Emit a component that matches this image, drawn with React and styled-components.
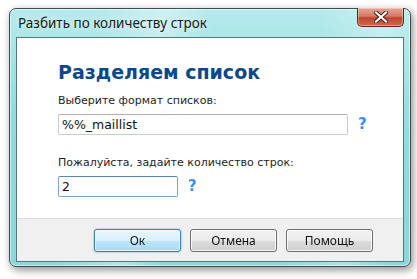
import React, { useState } from 'react';
import styled, { createGlobalStyle } from 'styled-components';

const GlobalStyle = createGlobalStyle`
  html, body {
    margin: 0;
    padding: 0;
    background: #ffffff;
  }
`;

const Page = styled.div`
  width: 417px;
  height: 279px;
  padding: 8px 0 0 9px;
  box-sizing: border-box;
`;

const Window = styled.div`
  width: 402px;
  height: 259px;
  box-sizing: border-box;
  border: 1px solid #3d4c50;
  border-radius: 7px;
  background:
    linear-gradient(100deg, rgba(255,255,255,0) 20%, rgba(255,255,255,0.35) 35%, rgba(255,255,255,0) 45%, rgba(255,255,255,0) 70%, rgba(255,255,255,0.3) 85%, rgba(255,255,255,0) 95%),
    linear-gradient(180deg, #b6eaec 0%, #92dcdd 40%, #8ad8d9 100%);
  box-shadow: 2px 3px 8px rgba(0, 0, 0, 0.45), inset 0 0 0 1px rgba(255, 255, 255, 0.55);
  display: flex;
  flex-direction: column;
  padding: 0 6px 4px 6px;
`;

const TitleBar = styled.div`
  height: 28px;
  flex: none;
  display: flex;
  align-items: flex-start;
  justify-content: space-between;
`;

const Title = styled.div`
  font-family: "Noto Sans", "Open Sans", sans-serif;
  font-size: 13.5px;
  color: #1a1a1a;
  padding: 5px 0 0 2px;
  text-shadow: 0 0 6px rgba(255, 255, 255, 0.9);
`;

const CloseButton = styled.button`
  flex: none;
  width: 47px;
  height: 19px;
  margin: -1px 0 0 0;
  padding: 0;
  border: 1px solid #5c2a22;
  border-top: none;
  border-radius: 0 0 5px 5px;
  background: linear-gradient(180deg, #e8a595 0%, #d47a65 45%, #c0442c 55%, #d0694f 100%);
  box-shadow: inset 0 0 0 1px rgba(255, 255, 255, 0.35);
  display: flex;
  align-items: center;
  justify-content: center;
`;

const Client = styled.div`
  flex: 1;
  border: 1px solid #4c7c82;
  background: #ffffff;
  display: flex;
  flex-direction: column;
`;

const Body = styled.div`
  flex: 1;
  padding: 22px 0 0 41px;
  font-family: "DejaVu Sans", Verdana, sans-serif;
`;

const Heading = styled.h1`
  margin: 0 0 10px 0;
  font-family: "DejaVu Sans", Verdana, sans-serif;
  font-weight: bold;
  font-size: 19px;
  line-height: 24px;
  color: #0d4888;
`;

const Label = styled.div`
  font-family: "DejaVu Sans", Verdana, sans-serif;
  font-size: 11px;
  line-height: 13px;
  color: #1e1e1e;
  margin-bottom: 7px;
`;

const Row = styled.div`
  display: flex;
  align-items: center;
  gap: 10px;
  margin-bottom: ${p => p.$gap || 0}px;
`;

const Input = styled.input`
  width: ${p => p.$w}px;
  height: 21px;
  box-sizing: border-box;
  margin: 0;
  padding: 0 0 0 3px;
  border: 1px solid ${p => p.$focus ? '#7da2ce' : '#c9cdd2'};
  border-top-color: ${p => p.$focus ? '#5b86b8' : '#abadb3'};
  border-radius: 2px;
  font-family: "DejaVu Sans", Verdana, sans-serif;
  font-size: 12.5px;
  color: #111;
  outline: none;
  background: #fff;
`;

const Help = styled.span`
  font-family: "DejaVu Sans", Verdana, sans-serif;
  font-weight: bold;
  font-size: 15px;
  color: #3d8cf0;
  line-height: 1;
`;

const Footer = styled.div`
  height: 43px;
  flex: none;
  background: #f0f0f0;
  border-top: 1px solid #dfdfdf;
  display: flex;
  justify-content: flex-end;
  align-items: flex-start;
  gap: 9px;
  padding: 10px 30px 0 0;
  box-sizing: border-box;
`;

const Button = styled.button`
  width: 87px;
  height: 23px;
  padding: 0;
  border-radius: 3px;
  font-family: "Noto Sans", "Open Sans", sans-serif;
  font-size: 12px;
  color: #111;
  border: 1px solid ${p => p.$primary ? '#3c7fb1' : '#707070'};
  background: ${p => p.$primary
    ? 'linear-gradient(180deg, #eaf6fd 0%, #d9f0fc 50%, #bee6fd 51%, #a7d9f5 100%)'
    : 'linear-gradient(180deg, #f2f2f2 0%, #ebebeb 50%, #dddddd 51%, #cfcfcf 100%)'};
  box-shadow: ${p => p.$primary
    ? 'inset 0 0 0 1px rgba(255,255,255,0.7), 0 0 2px #48a8e8'
    : 'inset 0 0 0 1px rgba(255,255,255,0.8)'};
`;

const App = () => {
  const [format, setFormat] = useState('%%_maillist');
  const [count, setCount] = useState('2');

  return (
    <>
      <GlobalStyle />
      <Page>
        <Window>
          <TitleBar>
            <Title>Разбить по количеству строк</Title>
            <CloseButton aria-label="Закрыть">
              <svg width="14" height="12" viewBox="0 0 14 12">
                <path d="M2 1.5 L12 10.5 M12 1.5 L2 10.5" stroke="#3a1a14" strokeWidth="4" strokeLinecap="square" />
                <path d="M2 1.5 L12 10.5 M12 1.5 L2 10.5" stroke="#ffffff" strokeWidth="2.2" strokeLinecap="square" />
              </svg>
            </CloseButton>
          </TitleBar>
          <Client>
            <Body>
              <Heading>Разделяем список</Heading>
              <Label>Выберите формат списков:</Label>
              <Row $gap={21}>
                <Input $w={290} value={format} onChange={e => setFormat(e.target.value)} />
                <Help>?</Help>
              </Row>
              <Label>Пожалуйста, задайте количество строк:</Label>
              <Row>
                <Input $w={120} $focus value={count} onChange={e => setCount(e.target.value)} autoFocus />
                <Help>?</Help>
              </Row>
            </Body>
            <Footer>
              <Button $primary>Ок</Button>
              <Button>Отмена</Button>
              <Button>Помощь</Button>
            </Footer>
          </Client>
        </Window>
      </Page>
    </>
  );
};

export default App;
